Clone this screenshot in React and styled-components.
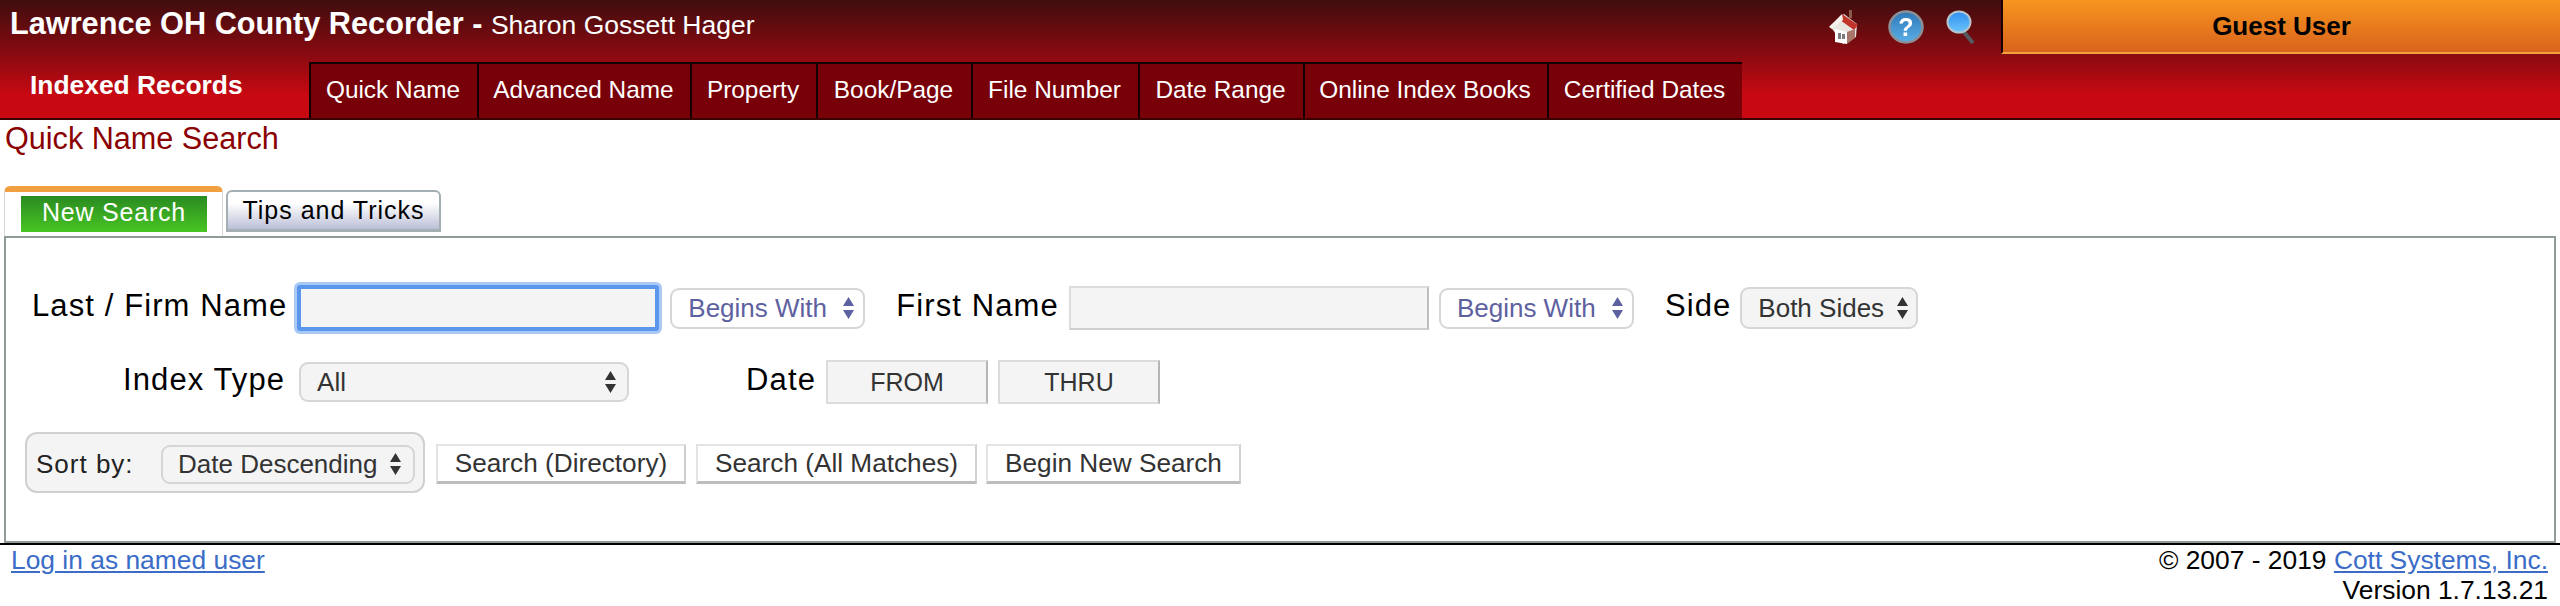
import styled, { createGlobalStyle } from "styled-components";

const GlobalStyle = createGlobalStyle`
  html, body {
    margin: 0;
    padding: 0;
    background: #fff;
    font-family: "Liberation Sans", Arial, sans-serif;
    overflow: hidden;
  }
  * { box-sizing: border-box; }
`;

const Header = styled.header`
  height: 120px;
  display: flex;
  flex-direction: column;
  background: linear-gradient(#400d0e 0, #8b0a10 56px, #c80912 95px, #c80912 100%);
  border-bottom: 2px solid #3a0000;
`;

const TopBar = styled.div`
  height: 62px;
  display: flex;
  align-items: flex-start;
`;

const Title = styled.h1`
  flex: 1;
  margin: 0;
  padding: 7px 0 0 10px;
  font-size: 30.7px;
  line-height: 34px;
  font-weight: 700;
  color: #fff;

  span {
    font-size: 26.5px;
    font-weight: 400;
  }
`;

const Icons = styled.div`
  display: flex;
  align-items: center;
  gap: 22px;
  height: 54px;
  padding-right: 25px;

  svg {
    filter: blur(0.5px);
  }

  svg:first-child {
    margin-right: 5px;
  }
`;

const GuestPanel = styled.div`
  width: 559px;
  height: 54px;
  display: flex;
  align-items: center;
  justify-content: center;
  background: linear-gradient(#f7951f, #d9631c);
  border-left: 2px solid #1a0000;
  border-bottom: 2px solid #f3a13c;
  font-size: 26px;
  font-weight: 700;
  color: #000;
`;

const NavRow = styled.nav`
  flex: 1;
  display: flex;
`;

const SectionName = styled.div`
  width: 309px;
  padding: 8px 0 0 30px;
  font-size: 26.4px;
  line-height: 30px;
  font-weight: 700;
  color: #fff;
`;

const NavTab = styled.a`
  width: ${(p) => p.$w}px;
  display: flex;
  align-items: center;
  justify-content: center;
  padding: 0 2px 3px 0;
  background: #780008;
  border-top: 2px solid #140000;
  border-left: 2px solid #140000;
  font-size: 24.4px;
  color: #fff;
`;

const PageTitle = styled.h2`
  margin: 0;
  padding: 2px 0 0 5px;
  height: 66px;
  font-size: 30.6px;
  line-height: 32px;
  font-weight: 400;
  color: #8b0000;
`;

const TabStrip = styled.div`
  display: flex;
  align-items: flex-end;
  height: 50px;
  padding-left: 4px;
  gap: 3px;
`;

const ActiveTab = styled.div`
  width: 219px;
  height: 50px;
  padding: 4px 15px 4px 16px;
  background: #fff;
  border-top: 6px solid #f0a040;
  border-left: 1px solid #d8d8d8;
  border-right: 1px solid #d8d8d8;
  border-radius: 6px 6px 0 0;
`;

const GreenLabel = styled.div`
  height: 36px;
  display: flex;
  align-items: center;
  justify-content: center;
  padding-bottom: 4px;
  background: linear-gradient(#2a8a20, #48c524);
  color: #fff;
  font-size: 25px;
  letter-spacing: 0.8px;
`;

const IdleTab = styled.div`
  width: 215px;
  height: 42px;
  margin-bottom: 4px;
  display: flex;
  align-items: center;
  justify-content: center;
  background: linear-gradient(#fff 30%, #bcc0d8);
  border: 2px solid #a4afb4;
  border-bottom-width: 3px;
  border-radius: 6px 6px 0 0;
  color: #000;
  font-size: 25px;
  letter-spacing: 1px;
`;

const Panel = styled.section`
  height: 307px;
  margin: 0 4px;
  padding: 0 0 0 19px;
  border: 2px solid #8f9a9a;
  display: flex;
  flex-direction: column;
`;

const Row = styled.div`
  display: flex;
  align-items: center;
  height: ${(p) => p.$h}px;
  margin-top: ${(p) => p.$top}px;
`;

const Label = styled.label`
  padding-bottom: 4px;
  font-size: 31px;
  letter-spacing: 1.1px;
  color: #000;
  margin-left: ${(p) => p.$left || 0}px;
  white-space: nowrap;
  flex-shrink: 0;
`;

const TextInput = styled.input`
  width: ${(p) => p.$w}px;
  height: ${(p) => p.$h}px;
  margin-left: ${(p) => p.$left || 0}px;
  flex-shrink: 0;
  background: #f4f4f4;
  border: 2px solid #dcdcdc;
  border-bottom-color: #cfcfcf;
  border-right-color: #bdbdbd;
  outline: none;
  padding: 0;

  ${(p) =>
    p.$focus &&
    `
    border: 4px solid #5a96ec;
    box-shadow: 0 0 0 3px #a8c8f6;
    border-radius: 3px;
  `}
`;

const SelectWrap = styled.div`
  position: relative;
  width: ${(p) => p.$w}px;
  height: ${(p) => p.$h}px;
  margin-left: ${(p) => p.$left || 0}px;
  flex-shrink: 0;

  svg {
    position: absolute;
    right: ${(p) => p.$arrow || 10}px;
    top: 50%;
    transform: translateY(-50%);
    pointer-events: none;
  }
`;

const Select = styled.select`
  appearance: none;
  width: 100%;
  height: 100%;
  margin: 0;
  padding: 0 0 0 ${(p) => p.$pad || 16}px;
  font-family: inherit;
  font-size: 26px;
  background: ${(p) => (p.$plain ? "#fff" : "#f4f4f4")};
  color: ${(p) => (p.$plain ? "#5e61a0" : "#333")};
  border: 2px solid #d6d6d6;
  border-radius: 9px;
  outline: none;
`;

const DateBox = styled.div`
  width: 162px;
  height: 44px;
  margin-left: ${(p) => p.$left}px;
  display: flex;
  align-items: center;
  justify-content: center;
  background: #f4f4f4;
  border: 2px solid #dcdcdc;
  border-right-color: #b5b5b5;
  font-size: 25px;
  color: #333;
  flex-shrink: 0;
`;

const SortGroup = styled.div`
  width: 400px;
  height: 61px;
  display: flex;
  align-items: center;
  padding: 3px 0 0 9px;
  background: #f4f4f4;
  border: 2px solid #d0d0d0;
  border-radius: 12px;
  flex-shrink: 0;
`;

const SortLabel = styled.span`
  width: 125px;
  font-size: 26px;
  letter-spacing: 1px;
  color: #222;
`;

const ActionButton = styled.button`
  width: ${(p) => p.$w}px;
  height: 40px;
  margin: 3px 0 0 ${(p) => p.$left}px;
  padding: 0;
  background: #fff;
  border: 2px solid #e4e4e4;
  border-bottom: 3px solid #bdbdbd;
  border-right-color: #cfcfcf;
  font-family: inherit;
  font-size: 26.2px;
  color: #333;
  flex-shrink: 0;
`;

const Footer = styled.footer`
  display: flex;
  justify-content: space-between;
  border-top: 2px solid #000;
  padding: 0 12px 0 11px;
  font-size: 26.4px;
  line-height: 30px;
  color: #000;
`;

const FooterLink = styled.a`
  color: #3a6cc8;
  text-decoration: underline;
`;

const FooterRight = styled.div`
  text-align: right;
`;

function Arrows({ color = "#333" }) {
  return (
    <svg width="13" height="24" viewBox="0 0 13 24">
      <path d="M6.5 1 L12 10 H1 Z M1 14 H12 L6.5 23 Z" fill={color} />
    </svg>
  );
}

function SelectField({ w, h, left, arrow, plain, value, pad, color }) {
  return (
    <SelectWrap $w={w} $h={h} $left={left} $arrow={arrow}>
      <Select $plain={plain} $pad={pad} defaultValue={value}>
        <option>{value}</option>
      </Select>
      <Arrows color={color} />
    </SelectWrap>
  );
}

function HouseIcon() {
  return (
    <svg width="34" height="36" viewBox="0 0 34 36">
      <path d="M22 1h3v8h-3z" fill="#8a5a4a" />
      <path d="M3 17 L16 35 L29 28 L30 15 L17 5 Z" fill="#e8e4e0" />
      <path d="M15 5 L31 16 L27 21 L13 11 Z" fill="#c0342a" />
      <path d="M15 5 L2 18 L5 20 L16 11 Z" fill="#f4f0ea" />
      <path d="M8 20 L20 23 V35 L8 33 Z" fill="#fff" />
      <path d="M20 23 L28 20 V29 L20 35 Z" fill="#a8766a" />
      <path d="M11 24h3v6h-3zM15 25h3v5h-3z" fill="#7d7d7d" />
    </svg>
  );
}

function HelpIcon() {
  return (
    <svg width="36" height="34" viewBox="0 0 36 34">
      <defs>
        <linearGradient id="helpFill" x1="0" y1="0" x2="0" y2="1">
          <stop offset="0" stopColor="#2f78b8" />
          <stop offset="1" stopColor="#5aaee6" />
        </linearGradient>
      </defs>
      <ellipse cx="18" cy="17" rx="16.5" ry="15.5" fill="url(#helpFill)" stroke="#8c9094" strokeWidth="2.5" />
      <text x="18" y="26" textAnchor="middle" fontFamily="Liberation Sans" fontWeight="700" fontSize="25" fill="#fff">
        ?
      </text>
    </svg>
  );
}

function SearchIcon() {
  return (
    <svg width="30" height="34" viewBox="0 0 30 34">
      <defs>
        <linearGradient id="lensFill" x1="0" y1="0" x2="0" y2="1">
          <stop offset="0" stopColor="#2f8ff0" />
          <stop offset="1" stopColor="#6cc4fa" />
        </linearGradient>
      </defs>
      <path d="M17 21 L27 33" stroke="#555a60" strokeWidth="4" />
      <ellipse cx="13" cy="12" rx="11.5" ry="10.5" fill="url(#lensFill)" stroke="#b8c4cc" strokeWidth="2" />
    </svg>
  );
}

const tabs = [
  ["Quick Name", 168],
  ["Advanced Name", 213],
  ["Property", 126],
  ["Book/Page", 155],
  ["File Number", 167],
  ["Date Range", 165],
  ["Online Index Books", 244],
  ["Certified Dates", 195],
];

export default function App() {
  return (
    <>
      <GlobalStyle />
      <Header>
        <TopBar>
          <Title>
            Lawrence OH County Recorder - <span>Sharon Gossett Hager</span>
          </Title>
          <Icons>
            <HouseIcon />
            <HelpIcon />
            <SearchIcon />
          </Icons>
          <GuestPanel>Guest User</GuestPanel>
        </TopBar>
        <NavRow>
          <SectionName>Indexed Records</SectionName>
          {tabs.map(([name, w]) => (
            <NavTab key={name} $w={w}>
              {name}
            </NavTab>
          ))}
        </NavRow>
      </Header>

      <PageTitle>Quick Name Search</PageTitle>

      <TabStrip>
        <ActiveTab>
          <GreenLabel>New Search</GreenLabel>
        </ActiveTab>
        <IdleTab>Tips and Tricks</IdleTab>
      </TabStrip>

      <Panel>
        <Row $h={52} $top={44}>
          <Label $left={7}>Last / Firm Name</Label>
          <TextInput $w={362} $h={46} $left={10} $focus />
          <SelectField w={195} h={41} left={11} plain value="Begins With" color="#5e61a0" />
          <Label $left={31}>First Name</Label>
          <TextInput $w={360} $h={44} $left={10} />
          <SelectField w={195} h={41} left={10} plain value="Begins With" color="#5e61a0" />
          <Label $left={31}>Side</Label>
          <SelectField w={178} h={42} left={9} arrow={9} value="Both Sides" />
        </Row>
        <Row $h={44} $top={26}>
          <Label $left={98}>Index Type</Label>
          <SelectField w={330} h={40} left={14} arrow={12} value="All" />
          <Label $left={117}>Date</Label>
          <DateBox $left={10}>FROM</DateBox>
          <DateBox $left={10}>THRU</DateBox>
        </Row>
        <Row $h={61} $top={28}>
          <SortGroup>
            <SortLabel>Sort by:</SortLabel>
            <SelectField w={254} h={39} arrow={13} pad={15} value="Date Descending" />
          </SortGroup>
          <ActionButton $w={250} $left={11}>Search (Directory)</ActionButton>
          <ActionButton $w={281} $left={10}>Search (All Matches)</ActionButton>
          <ActionButton $w={255} $left={9}>Begin New Search</ActionButton>
        </Row>
      </Panel>

      <Footer>
        <FooterLink href="#">Log in as named user</FooterLink>
        <FooterRight>
          © 2007 - 2019 <FooterLink href="#">Cott Systems, Inc.</FooterLink>
          <br />
          Version 1.7.13.21
        </FooterRight>
      </Footer>
    </>
  );
}
